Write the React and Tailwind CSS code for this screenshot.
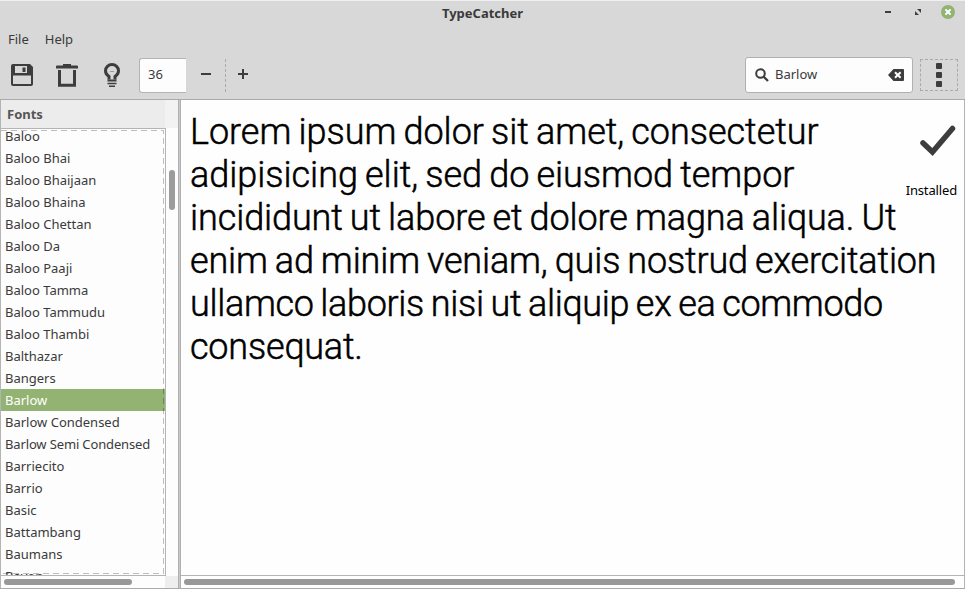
import React from "react";

const fonts = [
  "Baloo", "Baloo Bhai", "Baloo Bhaijaan", "Baloo Bhaina", "Baloo Chettan", "Baloo Da",
  "Baloo Paaji", "Baloo Tamma", "Baloo Tammudu", "Baloo Thambi", "Balthazar", "Bangers",
  "Barlow", "Barlow Condensed", "Barlow Semi Condensed", "Barriecito", "Barrio", "Basic",
  "Battambang", "Baumans", "Bayon",
];

const lines = [
  ["Lorem ipsum dolor sit amet, consectetur", "tracking-[-0.03px]"],
  ["adipisicing elit, sed do eiusmod tempor", "tracking-[-0.03px]"],
  ["incididunt ut labore et dolore magna aliqua. Ut", "tracking-[-0.1px]"],
  ["enim ad minim veniam, quis nostrud exercitation", "tracking-[-0.15px]"],
  ["ullamco laboris nisi ut aliquip ex ea commodo", "tracking-[-0.34px]"],
  ["consequat.", "tracking-[-0.2px]"],
];

function TitleBar() {
  return (
    <div className="grid h-[27px] shrink-0 grid-cols-[1fr_auto_1fr] items-start border-t border-[#f0f0f0]">
      <span />
      <h1 className="text-[13px] leading-[24px] font-bold">TypeCatcher</h1>
      <div className="flex h-[22px] items-center justify-end pr-[10px]">
        <svg className="mr-[24px]" width="6" height="14" viewBox="0 0 6 14">
          <rect y="6" width="6" height="2" fill="#3d3d3d" />
        </svg>
        <svg className="mr-[20px]" width="6" height="6" viewBox="0 0 6 6" fill="#3d3d3d">
          <path d="M2 0h4v4L4.8 2.8 3.6 1.6zM0 2l4 4H0z" />
        </svg>
        <svg width="14" height="14" viewBox="0 0 14 14">
          <circle cx="7" cy="7" r="7" fill="#92b372" />
          <path d="M4.4 4.4l5.2 5.2M9.6 4.4L4.4 9.6" stroke="#fff" strokeWidth="2" />
        </svg>
      </div>
    </div>
  );
}

function SaveIcon() {
  return (
    <svg width="22" height="22" viewBox="0 0 22 22">
      <path fillRule="evenodd" fill="#3d3d3d" d="M2 0h17l3 3v17a2 2 0 0 1-2 2H2a2 2 0 0 1-2-2V2a2 2 0 0 1 2-2zM4 2v7h12V2zM2 11.500v8.500h18v-8.500z" />
      <rect x="11.500" y="3.500" width="3" height="4.500" fill="#3d3d3d" />
    </svg>
  );
}

function TrashIcon() {
  return (
    <svg width="22" height="23" viewBox="0 0 22 23" fill="#3d3d3d">
      <path d="M7 0h8v1.500h6a1 1 0 0 1 1 1V4.500H0V2.500a1 1 0 0 1 1-1h6z" />
      <path d="M3.500 6v15.300h15V6" fill="none" stroke="#3d3d3d" strokeWidth="3" />
    </svg>
  );
}

function BulbIcon() {
  return (
    <svg width="16" height="24" viewBox="0 0 16 24" fill="none" stroke="#3d3d3d">
      <path strokeWidth="3" d="M5 16.500V13.500C2.700 12 1.500 10 1.500 7.700a6.500 6.200 0 0 1 13 0C14.500 10 13.300 12 11 13.500v3" />
      <path strokeWidth="2" d="M3.500 17.500h9" />
      <path strokeWidth="1.500" d="M3.500 20.500h9M5 23.200h6" />
      <path stroke="#9a9a9a" d="M6 8.500h4" />
    </svg>
  );
}

function Toolbar() {
  return (
    <div className="flex h-[47px] shrink-0 items-center pb-px pl-[11px]">
      <SaveIcon />
      <div className="ml-[23px] flex"><TrashIcon /></div>
      <div className="ml-[26px] flex"><BulbIcon /></div>
      <div className="ml-[19px] flex h-[35px] w-[47px] items-center rounded-l-[3px] border border-r-0 border-[#b4b4b4] bg-[#fdfdfd] pl-2">
        36
      </div>
      <svg className="ml-[15px]" width="10" height="10" viewBox="0 0 10 10">
        <path d="M0 4h10" stroke="#3d3d3d" strokeWidth="2" />
      </svg>
      <div className="ml-[14px] h-[33px] border-l border-dashed border-[#aaa]" />
      <svg className="ml-[12px] overflow-visible" width="10" height="10" viewBox="0 0 10 10">
        <path d="M0 4h10M5 -1v10" stroke="#3d3d3d" strokeWidth="2" />
      </svg>
      <div className="mr-[7px] ml-auto flex h-[36px] w-[168px] items-center rounded-[3px] border border-[#b0b0b0] bg-[#fdfdfd] pl-[9px]">
        <svg width="14" height="14" viewBox="0 0 14 14" fill="none" stroke="#3d3d3d">
          <circle cx="5.500" cy="5.500" r="4.300" strokeWidth="2" />
          <path d="M8.700 8.700l4.300 4.300" strokeWidth="2.300" />
        </svg>
        <span className="ml-[6px]">Barlow</span>
        <svg className="mr-[8px] ml-auto" width="16" height="12" viewBox="0 0 16 12">
          <path d="M5.500 0H15a1 1 0 0 1 1 1v10a1 1 0 0 1-1 1H5.500L0 6z" fill="#3d3d3d" />
          <path d="M7 3.200l5.600 5.600M12.600 3.200L7 8.800" stroke="#fff" strokeWidth="2" />
        </svg>
      </div>
      <div className="mr-[7px] flex h-[32px] w-[38px] flex-col items-center justify-center gap-[3px] border border-dashed border-[#aaa]">
        <span className="size-[6px] rounded-[1px] bg-[#3d3d3d]" />
        <span className="size-[6px] rounded-[1px] bg-[#3d3d3d]" />
        <span className="size-[6px] rounded-[1px] bg-[#3d3d3d]" />
      </div>
    </div>
  );
}

function FontPane() {
  return (
    <aside className="flex w-[178px] shrink-0 flex-col border-l border-[#b4b4b4] bg-[#fdfdfd]">
      <div className="flex h-[28px] shrink-0">
        <div className="w-[164px] bg-[#ececec] pl-[6px] leading-[28px] font-bold text-[#555]">Fonts</div>
        <div className="flex-1 bg-[#f2f2f2]" />
      </div>
      <div className="flex min-h-0 flex-1">
        <div className="relative w-[165px] overflow-hidden border-y border-r border-[#b4b4b4]">
          <ul className="-mt-[4px]">
            {fonts.map((name) => (
              <li
                key={name}
                className={
                  name === "Barlow"
                    ? "h-[22px] bg-[#92b372] pl-[4px] leading-[22px] whitespace-nowrap text-white"
                    : name === "Barlow Semi Condensed"
                      ? "h-[22px] pl-[4px] leading-[22px] tracking-[-0.14px] whitespace-nowrap"
                      : "h-[22px] pl-[4px] leading-[22px] whitespace-nowrap"
                }
              >
                {name}
              </li>
            ))}
          </ul>
          <svg className="absolute inset-0" width="164" height="446" fill="none" stroke="#000" strokeOpacity="0.25" strokeDasharray="6 4">
            <path d="M0 1.500H162.500V444.500H0" />
          </svg>
        </div>
        <div className="flex-1 pt-[42px] pl-[3px]">
          <div className="h-[40px] w-[6px] rounded-full bg-[#9c9c9c]" />
        </div>
      </div>
      <div className="flex h-[12px] shrink-0">
        <div className="flex w-[164px] items-center pl-[3px]">
          <div className="h-[6px] w-[128px] rounded-full bg-[#989898]" />
        </div>
        <div className="flex-1 bg-[#eeeeee]" />
      </div>
    </aside>
  );
}

function Preview() {
  return (
    <main className="flex min-w-0 flex-1 flex-col border-r border-[#b4b4b4] bg-[#fefefe]">
      <div className="relative flex-1 pt-[11px] pl-[9px]">
        <div className="font-['Roboto',sans-serif] text-[36px] leading-[43px] font-light text-black [word-spacing:-1.6px] [-webkit-text-stroke:0.5px_black]">
          {lines.map(([text, tracking]) => (
            <p key={text} className={`whitespace-nowrap ${tracking}`}>{text}</p>
          ))}
        </div>
        <div className="absolute top-[24px] right-[7px] flex flex-col items-end text-black">
          <svg width="37" height="33" viewBox="0 0 37 33">
            <path d="M3 19L12.500 28L32.500 4.500" fill="none" stroke="#3d3d3d" strokeWidth="5.500" strokeLinecap="round" />
          </svg>
          <span className="mt-[23px] leading-[20px] tracking-[-0.15px]">Installed</span>
        </div>
      </div>
      <div className="flex h-[13px] shrink-0 items-center border-t border-[#b4b4b4] pr-[9px] pl-[3px]">
        <div className="h-[6px] flex-1 rounded-full bg-[#989898]" />
      </div>
    </main>
  );
}

export default function App() {
  return (
    <div className="flex h-[589px] w-[965px] flex-col overflow-hidden bg-[#d8d8d8] font-['Noto_Sans','Open_Sans',sans-serif] text-[13px] text-[#3a3a3a]">
      <TitleBar />
      <nav className="flex h-[25px] shrink-0 items-center gap-[16px] pl-2">
        <span>File</span>
        <span>Help</span>
      </nav>
      <Toolbar />
      <div className="flex min-h-0 flex-1 border-t border-b border-[#aaaaaa]">
        <FontPane />
        <div className="w-[3px] shrink-0 border-x border-[#b0b0b0] bg-[#c8c8c8]" />
        <Preview />
      </div>
    </div>
  );
}
